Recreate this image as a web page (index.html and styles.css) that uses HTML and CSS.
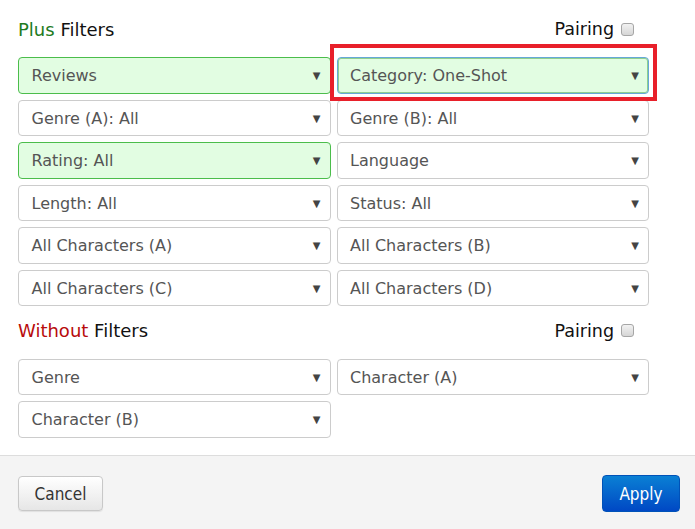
FILE: index.html
```html
<!DOCTYPE html>
<html>
<head>
<meta charset="utf-8">
<link rel="stylesheet" href="styles.css">
</head>
<body>
<div class="modal">
  <div class="content">
    <div class="section-head">
      <div class="title"><span class="plus">Plus</span> Filters</div>
      <label class="pairing">Pairing <span class="checkbox"></span></label>
    </div>
    <div class="grid">
      <div class="select active"><span>Reviews</span><span class="arrow">▼</span></div>
      <div class="select active focus"><span>Category: One-Shot</span><span class="arrow">▼</span></div>
      <div class="select"><span>Genre (A): All</span><span class="arrow">▼</span></div>
      <div class="select"><span>Genre (B): All</span><span class="arrow">▼</span></div>
      <div class="select active"><span>Rating: All</span><span class="arrow">▼</span></div>
      <div class="select"><span>Language</span><span class="arrow">▼</span></div>
      <div class="select"><span>Length: All</span><span class="arrow">▼</span></div>
      <div class="select"><span>Status: All</span><span class="arrow">▼</span></div>
      <div class="select"><span>All Characters (A)</span><span class="arrow">▼</span></div>
      <div class="select"><span>All Characters (B)</span><span class="arrow">▼</span></div>
      <div class="select"><span>All Characters (C)</span><span class="arrow">▼</span></div>
      <div class="select"><span>All Characters (D)</span><span class="arrow">▼</span></div>
    </div>
    <div class="section-head second">
      <div class="title"><span class="without">Without</span> Filters</div>
      <label class="pairing">Pairing <span class="checkbox"></span></label>
    </div>
    <div class="grid">
      <div class="select"><span>Genre</span><span class="arrow">▼</span></div>
      <div class="select"><span>Character (A)</span><span class="arrow">▼</span></div>
      <div class="select"><span>Character (B)</span><span class="arrow">▼</span></div>
    </div>
  </div>
  <div class="footer">
    <button class="btn cancel">Cancel</button>
    <button class="btn apply">Apply</button>
  </div>
  <div class="highlight"></div>
</div>
</body>
</html>
```

FILE: styles.css
```css
html, body {
  margin: 0;
  padding: 0;
  background: #fff;
}
body {
  font-family: "DejaVu Sans", Verdana, sans-serif;
  color: #111;
}
.modal {
  position: relative;
  width: 695px;
  height: 529px;
  display: flex;
  flex-direction: column;
  overflow: hidden;
}
.content {
  flex: 1;
  padding: 17px 46px 0 18px;
}
.section-head {
  height: 24px;
  margin-bottom: 16px;
  display: flex;
  align-items: center;
  justify-content: space-between;
  padding-right: 15px;
}
.section-head.second {
  margin-top: 12.5px;
}
.title {
  font-size: 18px;
  color: #111;
}
.plus { color: #1e7b1e; }
.without { color: #b80c0c; }
.pairing {
  font-size: 17.5px;
  color: #111;
  display: flex;
  align-items: center;
  gap: 7px;
}
.checkbox {
  display: inline-block;
  width: 11px;
  height: 11px;
  border: 1px solid #a6a6a6;
  border-radius: 3px;
  background: linear-gradient(#f2f2f2, #d6d6d6);
}
.grid {
  display: grid;
  grid-template-columns: 1fr 1fr;
  column-gap: 6px;
  row-gap: 6px;
}
.select {
  box-sizing: border-box;
  height: 36.5px;
  border: 1px solid #cccccc;
  border-radius: 4px;
  background: #fff;
  color: #555;
  font-size: 16px;
  display: flex;
  align-items: center;
  justify-content: space-between;
  padding: 1px 9px 0 12.5px;
}
.select.active {
  background: #e2fde2;
  border-color: #4bbd4b;
}
.select.focus {
  border-color: #66a8d8;
  box-shadow: inset 0 0 0 1px #8fd08f;
}
.arrow {
  font-size: 10px;
  color: #444;
}
.footer {
  height: 71px;
  border-top: 1px solid #dddddd;
  background: #f4f4f4;
  display: flex;
  align-items: center;
  justify-content: space-between;
  padding: 2px 15px 0 18px;
}
.btn {
  font-family: "DejaVu Sans Condensed", "DejaVu Sans", sans-serif;
  font-size: 17px;
  cursor: pointer;
}
.cancel {
  width: 85px;
  height: 35px;
  border: 1px solid #c8c8c8;
  border-radius: 4px;
  background: linear-gradient(#ffffff, #e6e6e6);
  color: #333;
  box-shadow: 0 1px 1px rgba(0,0,0,0.08);
}
.apply {
  width: 78px;
  height: 37px;
  border: 1px solid #0052b8;
  border-radius: 4px;
  background: linear-gradient(#0a80d4, #0048c4);
  color: #fff;
}
.highlight {
  position: absolute;
  left: 330px;
  top: 44px;
  width: 319px;
  height: 49px;
  border: 4px solid #e8202a;
  pointer-events: none;
}
```
